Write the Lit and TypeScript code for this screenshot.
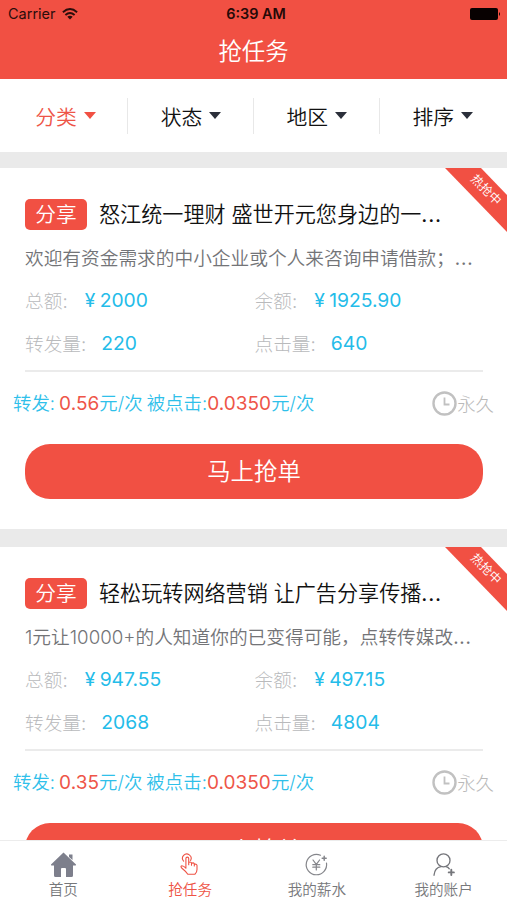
import { LitElement, html, css, svg } from "lit";
import { customElement, property } from "lit/decorators.js";
import { classMap } from "lit/directives/class-map.js";

interface Task {
  title: string;
  summary: string;
  total: string;
  balance: string;
  forwards: string;
  clicks: string;
  forwardPrice: string;
  clickPrice: string;
}

const tasks: Task[] = [
  {
    title: "怒江统一理财 盛世开元您身边的一",
    summary: "欢迎有资金需求的中小企业或个人来咨询申请借款；",
    total: "2000",
    balance: "1925.90",
    forwards: "220",
    clicks: "640",
    forwardPrice: "0.56",
    clickPrice: "0.0350",
  },
  {
    title: "轻松玩转网络营销 让广告分享传播",
    summary: "1元让10000+的人知道你的已变得可能，点转传媒改",
    total: "947.55",
    balance: "497.15",
    forwards: "2068",
    clicks: "4804",
    forwardPrice: "0.35",
    clickPrice: "0.0350",
  },
];

const icons = {
  home: svg`<path d="M12.500 0.500 L25 12.600 Q25.200 13.600 24 13.600 H22 V23.500 Q22 25 20.500 25 H15 V17 Q15 16 14 16 H11 Q10 16 10 17 V25 H4.500 Q3 25 3 23.500 V13.600 H1 Q-0.200 13.600 0 12.600 Z M18 2.500 H21.500 V8 L18 5 Z" fill="#7d7f8c"/>`,
  tap: svg`<g fill="none" stroke="#ee5345" stroke-width="1.100" stroke-linecap="round" stroke-linejoin="round"><path d="M5.600 9.200 A4.300 4.300 0 1 1 12.600 8.400"/><path d="M7.900 16.200 V6.500 A1.400 1.400 0 0 1 10.700 6.500 V12.800 V10.600 Q12.200 9.300 13.500 10.800 V13.300 V11.500 Q15.200 10.200 16.300 11.700 V14 V12.500 Q18.400 11.500 19 13.300 V17.500 Q19 20.600 16.900 22.300 H9.800 Q8 19.500 3.700 16 Q2.100 14.300 3.900 13.700 Q5.600 13.700 7.900 16.200"/></g>`,
  salary: svg`<g fill="none" stroke="#85868b" stroke-width="1.200" stroke-linecap="round"><path d="M16.500 3.200 A10.200 10.200 0 1 0 22.500 11"/><path d="M9 8 L12.300 12.400 L15.600 8 M12.300 12.400 V18 M8.800 12.700 H15.800 M8.800 15.200 H15.800"/><path d="M20.200 4.300 V8.300 M18.200 6.300 H22.200" stroke-width="1.500"/></g>`,
  account: svg`<g fill="none" stroke="#75767b" stroke-width="1.350" stroke-linecap="round"><circle cx="12.500" cy="8.400" r="6.500"/><path d="M3 23.200 Q3.800 15.600 10 14.700 M15 14.700 Q17.200 15.200 18.300 16.800"/><path d="M20.300 17.800 V23 M17.700 20.400 H22.900" stroke-width="1.900"/></g>`,
};

@customElement("task-card")
class TaskCard extends LitElement {
  @property({ attribute: false }) task!: Task;

  static styles = css`
    :host {
      display: block;
      position: relative;
      height: 361px;
      padding-top: 31px;
      box-sizing: border-box;
      background: #fff;
      overflow: hidden;
      white-space: nowrap;
    }
    .ribbon {
      position: absolute;
      top: 0;
      right: 0;
      width: 62px;
      height: 64px;
    }
    .ribbon-shape {
      display: block;
    }
    .ribbon-text {
      position: absolute;
      left: 16px;
      top: 13px;
      width: 50px;
      text-align: center;
      font-size: 12.300px;
      line-height: 18px;
      color: #fff;
      transform: rotate(45deg);
    }
    .head {
      display: flex;
      align-items: center;
      height: 31px;
      padding-left: 25px;
      gap: 12px;
    }
    .badge {
      width: 62px;
      height: 31px;
      line-height: 32px;
      border-radius: 5px;
      background: #f15043;
      color: #fff;
      text-align: center;
      font-size: 20.700px;
    }
    .title {
      font-size: 21.100px;
      line-height: 32px;
      color: #111;
    }
    .dots {
      font-weight: 400;
      letter-spacing: 0.800px;
    }
    .summary {
      padding-left: 25px;
      margin-top: 14px;
      height: 28px;
      line-height: 29px;
      font-size: 18.700px;
      color: #737477;
    }
    .stats {
      display: grid;
      grid-template-columns: 229.500px 1fr;
      grid-auto-rows: 43px;
      margin: 6px 24px 0 25px;
      padding-bottom: 6px;
    }
    .stat {
      display: flex;
      align-items: center;
      font-size: 18.700px;
    }
    .label {
      color: #b9babc;
      font-weight: 300;
      margin-top: -1px;
    }
    .value {
      color: #24bce9;
      font-size: 19.300px;
      font-weight: 400;
      margin-left: 15px;
    }
    .yen {
      display: inline-block;
      width: 15px;
      padding-left: 2px;
    }
    .rule {
      height: 1.500px;
      margin: 0 24px 0 25px;
      background: #ebebeb;
    }
    .prices {
      display: flex;
      justify-content: space-between;
      align-items: center;
      height: 64px;
      padding: 0 13px;
      font-size: 18.400px;
      color: #2fc0ea;
    }
    .rates {
      letter-spacing: 0.040px;
      word-spacing: -1.200px;
      line-height: 26px;
    }
    .amount {
      color: #ee5548;
      font-size: 19px;
      font-weight: 400;
    }
    .term {
      display: flex;
      align-items: center;
      line-height: 24px;
      color: #b9b9b9;
      font-weight: 300;
    }
    .button {
      margin: 8px 24px 0 25px;
      height: 55px;
      line-height: 55px;
      border-radius: 25px;
      background: #f15043;
      color: #fff;
      font-size: 23.400px;
      text-align: center;
    }
  `;

  private stat(label: string, value: string, money = false) {
    return html`<div class="stat">
      <span class="label">${label}:</span>
      <span class="value">${money ? html`<span class="yen">¥</span>` : ""}${value}</span>
    </div>`;
  }

  render() {
    const t = this.task;
    return html`
      <div class="ribbon">
        <svg class="ribbon-shape" width="62" height="64" viewBox="0 0 62 64">
          <path d="M0 0 H36 L62 27 V64 Z" fill="#f15043" />
        </svg>
        <span class="ribbon-text">热抢中</span>
      </div>
      <div class="head">
        <span class="badge">分享</span>
        <span class="title">${t.title}<span class="dots">...</span></span>
      </div>
      <div class="summary">${t.summary}<span class="dots">...</span></div>
      <div class="stats">
        ${this.stat("总额", t.total, true)} ${this.stat("余额", t.balance, true)}
        ${this.stat("转发量", t.forwards)} ${this.stat("点击量", t.clicks)}
      </div>
      <div class="rule"></div>
      <div class="prices">
        <span class="rates">转发: <span class="amount">${t.forwardPrice}</span>元/次 被点击:<span class="amount">${t.clickPrice}</span>元/次</span>
        <span class="term">
          <svg width="25" height="25" viewBox="0 0 25 25" fill="none" stroke="#c1c1c1">
            <circle cx="12.500" cy="12.500" r="11" stroke-width="2.400" />
            <path d="M12.500 6.500 V13.500 H17.500" stroke-width="1.800" />
          </svg>永久
        </span>
      </div>
      <div class="button">马上抢单</div>
    `;
  }
}

@customElement("app-root")
class AppRoot extends LitElement {
  static styles = css`
    :host {
      display: flex;
      flex-direction: column;
      width: 507px;
      height: 900px;
      overflow: hidden;
      background: #eaeaea;
      font-family: Inter, "Noto Sans CJK SC", sans-serif;
      font-weight: 350;
      white-space: nowrap;
    }
    .top {
      flex: none;
      height: 79px;
      background: #f15043;
    }
    .status {
      display: grid;
      grid-template-columns: 1fr auto 1fr;
      align-items: center;
      height: 27px;
      padding: 0 6px 0 8px;
      font-size: 14.500px;
      font-weight: 400;
      color: #2b0d0b;
    }
    .carrier {
      display: flex;
      align-items: center;
      gap: 6px;
    }
    .clock {
      font-weight: 600;
      font-size: 14.400px;
      padding-left: 3px;
      color: #250907;
    }
    .battery {
      justify-self: end;
    }
    .heading {
      height: 49px;
      line-height: 50px;
      text-align: center;
      font-size: 23.400px;
      color: #fff;
    }
    .filters {
      flex: none;
      display: grid;
      grid-template-columns: 128px 126px 125.500px 1fr;
      align-items: center;
      height: 73px;
      background: #fff;
    }
    .filter {
      display: flex;
      align-items: center;
      justify-content: center;
      gap: 7px;
      height: 36px;
      padding-left: 1px;
      font-size: 20.800px;
      color: #111;
      border-right: 1.500px solid #e8e8e8;
      box-sizing: border-box;
    }
    .filter:last-child {
      border-right-color: transparent;
      padding-left: 0;
    }
    .caret {
      width: 0;
      border: 6px solid transparent;
      border-top: 7px solid #2b2f3a;
      border-bottom: 0;
    }
    .selected {
      padding-left: 4px;
      color: #ee5548;
    }
    .selected .caret {
      border-top-color: #f15043;
    }
    .list {
      flex: 1;
      min-height: 0;
      overflow: hidden;
      display: flex;
      flex-direction: column;
      gap: 18px;
      padding-top: 16px;
    }
    .card {
      flex: none;
    }
    .tabs {
      flex: none;
      display: grid;
      grid-template-columns: repeat(4, 1fr);
      height: 60px;
      box-sizing: border-box;
      border-top: 1px solid #ececec;
      background: #fff;
    }
    .tab {
      display: flex;
      flex-direction: column;
      align-items: center;
      padding-top: 11px;
      font-size: 14.600px;
      line-height: 22px;
      gap: 2px;
      color: #77787b;
    }
    .active {
      color: #ee5345;
    }
  `;

  render() {
    const filters = ["分类", "状态", "地区", "排序"];
    const tabs = [
      { label: "首页", icon: icons.home },
      { label: "抢任务", icon: icons.tap },
      { label: "我的薪水", icon: icons.salary },
      { label: "我的账户", icon: icons.account },
    ];
    return html`
      <header class="top">
        <div class="status">
          <span class="carrier">Carrier
            <svg width="16" height="12" viewBox="0 0 16 12" fill="none" stroke="#2b0d0b" stroke-width="1.900">
              <path d="M0.900 4.200 Q8 -2 15.100 4.200 M3.400 7 Q8 3 12.600 7" />
              <path d="M5.300 8.700 Q8 6.600 10.700 8.700 L8 11.600 Z" fill="#2b0d0b" stroke="none" />
            </svg>
          </span>
          <span class="clock">6:39 AM</span>
          <svg class="battery" width="31" height="12" viewBox="0 0 31 12">
            <rect width="28" height="12" rx="2" fill="#080101" />
            <path d="M29 4 Q31 6 29 8 Z" fill="#080101" />
          </svg>
        </div>
        <div class="heading">抢任务</div>
      </header>
      <nav class="filters">
        ${filters.map(
          (f, i) => html`<div class=${classMap({ filter: true, selected: i === 0 })}>${f}<span class="caret"></span></div>`
        )}
      </nav>
      <main class="list">${tasks.map((t) => html`<task-card class="card" .task=${t}></task-card>`)}</main>
      <nav class="tabs">
        ${tabs.map(
          (t, i) => html`<div class=${classMap({ tab: true, active: i === 1 })}>
            <svg width="25" height="25" viewBox="0 0 25 25">${t.icon}</svg>
            <span>${t.label}</span>
          </div>`
        )}
      </nav>
    `;
  }
}
